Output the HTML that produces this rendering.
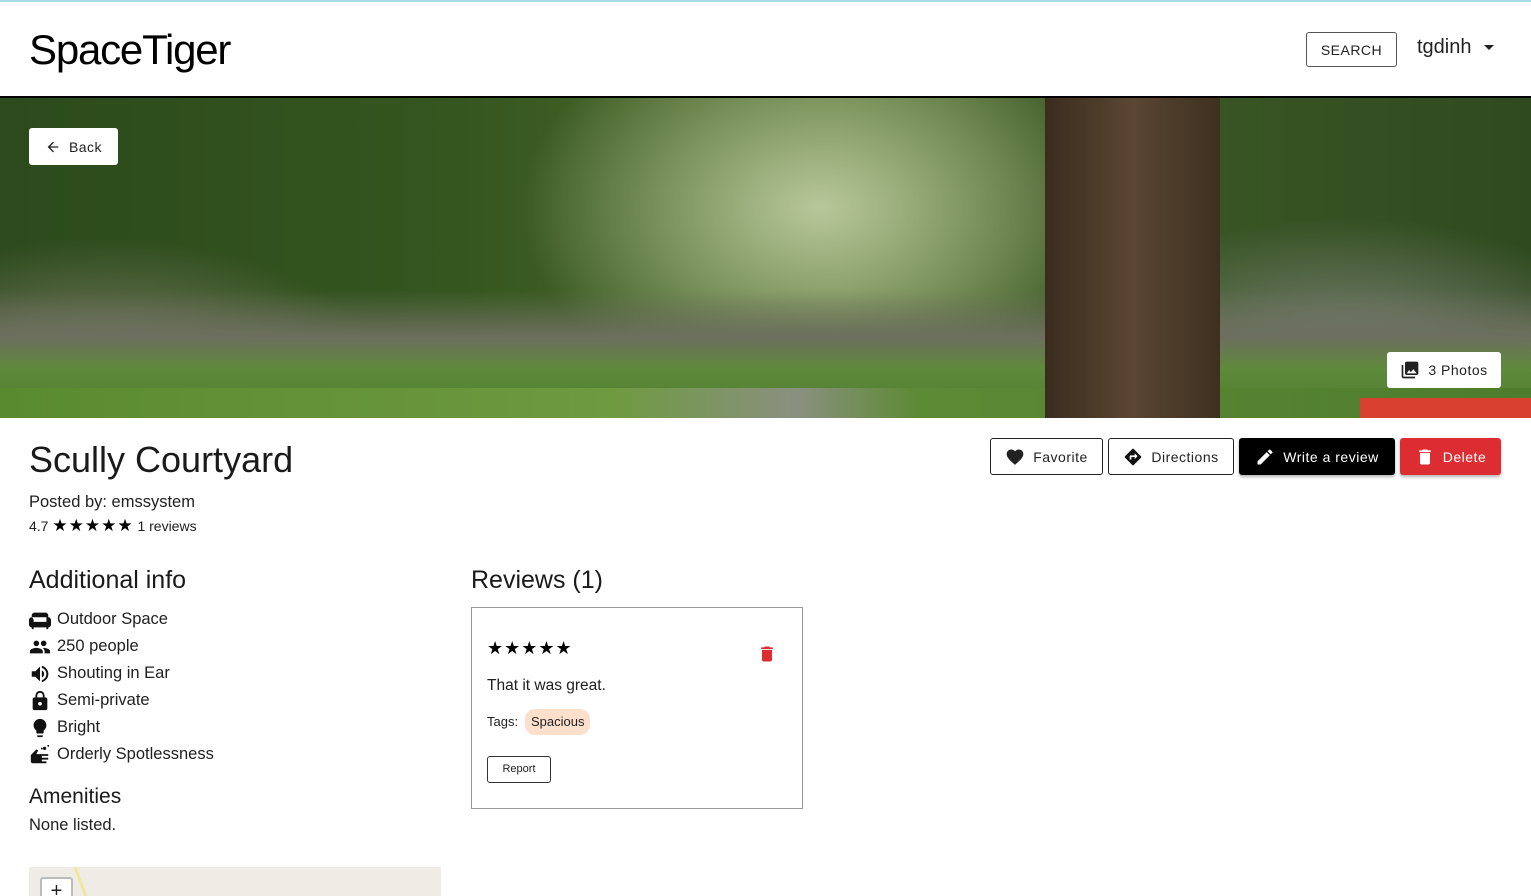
<!DOCTYPE html>
<html><head><style>
*{box-sizing:border-box;margin:0;padding:0}
body{width:1531px;height:896px;overflow:hidden;background:#fff;font-family:"Liberation Sans",sans-serif;color:#212121;position:relative}
.abs{position:absolute}
.btn{position:absolute;display:flex;align-items:center;justify-content:center;gap:8px;font-size:14px;letter-spacing:.5px;border-radius:3px}
.item{display:flex;align-items:center;height:27px;font-size:16.5px;gap:6px}
.item svg{width:22px;height:22px}
</style></head><body>
<div class="abs" style="top:0;left:0;width:1531px;height:2px;background:#a9dbe6"></div>
<div class="abs" style="left:29px;top:26px;font-size:42px;letter-spacing:-1.2px;color:#000">SpaceTiger</div>
<div class="btn" style="left:1306px;top:32px;width:91px;height:35px;border:1px solid #555;font-size:14px;color:#222">SEARCH</div>
<div class="abs" style="left:1417px;top:36px;font-size:20px;color:#222">tgdinh</div>
<svg class="abs" style="left:1484px;top:45px" width="10" height="6" viewBox="0 0 10 6"><path d="M0 0h10L5 5z" fill="#222"/></svg>
<div class="abs" style="top:96px;left:0;width:1531px;height:2px;background:#000"></div>
<div class="abs" style="top:98px;left:0;width:1531px;height:320px;overflow:hidden;background:
linear-gradient(180deg,rgba(0,0,0,0) 60%,#6d6f5e 75%,#5e8a3a 85%,#4b7a2e 100%),
radial-gradient(ellipse 300px 200px at 820px 110px,#b8c79a,transparent),
radial-gradient(ellipse 300px 160px at 100px 300px,#8c8577,transparent),
radial-gradient(ellipse 300px 160px at 1350px 280px,#8a8b88,transparent),
linear-gradient(90deg,#2c4a1c,#35561f 30%,#4f6d2c 55%,#3d5a26 70%,#2f4a1f 100%)">
<div class="abs" style="left:0;top:290px;width:1531px;height:30px;background:linear-gradient(90deg,#5a8a30,#6e9a40 40%,#8a9080 52%,#5d8a35 60%,#4d7c2c)"></div>
<div class="abs" style="left:1045px;top:0;width:175px;height:320px;background:linear-gradient(90deg,#3a2c1e,#5a4632,#3e3020)"></div>
<div class="abs" style="left:1360px;top:300px;width:171px;height:20px;background:#d84030"></div>
</div>
<div class="btn" style="left:29px;top:128px;width:89px;height:37px;background:#fff;color:#222">
<svg width="16" height="16" viewBox="0 0 24 24"><path d="M20 11H7.8l5.6-5.6L12 4l-8 8 8 8 1.4-1.4L7.8 13H20z" fill="#222"/></svg>Back</div>
<div class="btn" style="left:1387px;top:352px;width:114px;height:36px;background:#fff;color:#222">
<svg width="20" height="20" viewBox="0 0 24 24"><path d="M22 16V4c0-1.1-.9-2-2-2H8c-1.1 0-2 .9-2 2v12c0 1.1.9 2 2 2h12c1.1 0 2-.9 2-2zm-11-4l2 2.7 3-3.7 4 5H8l3-4zM2 6v14c0 1.1.9 2 2 2h14v-2H4V6H2z" fill="#222"/></svg>3 Photos</div>
<div class="abs" style="left:29px;top:439px;font-size:36px;color:#1a1a1a">Scully Courtyard</div>
<div class="btn" style="left:990px;top:438px;width:113px;height:37px;border:1px solid #222;color:#222">
<svg width="20" height="20" viewBox="0 0 24 24"><path d="M12 21.4l-1.5-1.3C5.4 15.4 2 12.3 2 8.5 2 5.4 4.4 3 7.5 3c1.7 0 3.4.8 4.5 2.1C13.1 3.8 14.8 3 16.5 3 19.6 3 22 5.4 22 8.5c0 3.8-3.4 6.9-8.5 11.5z" fill="#222"/></svg>Favorite</div>
<div class="btn" style="left:1108px;top:438px;width:126px;height:37px;border:1px solid #222;color:#222">
<svg width="20" height="20" viewBox="0 0 24 24"><path d="M21.7 11.3l-9-9a1 1 0 00-1.4 0l-9 9a1 1 0 000 1.4l9 9a1 1 0 001.4 0l9-9a1 1 0 000-1.4zM14 14.5V12h-4v3H8v-4c0-.6.4-1 1-1h5V7.5l3.5 3.5z" fill="#111"/></svg>Directions</div>
<div class="btn" style="left:1239px;top:438px;width:156px;height:37px;background:#000;color:#fff;box-shadow:0 2px 3px rgba(0,0,0,.3)">
<svg width="20" height="20" viewBox="0 0 24 24"><path d="M3 17.25V21h3.75L17.8 9.94l-3.75-3.75zM20.7 7.04a1 1 0 000-1.41l-2.34-2.34a1 1 0 00-1.41 0l-1.83 1.83 3.75 3.75z" fill="#fff"/></svg>Write a review</div>
<div class="btn" style="left:1400px;top:438px;width:101px;height:37px;background:#dc2d32;color:#fff;box-shadow:0 2px 3px rgba(0,0,0,.3)">
<svg width="20" height="20" viewBox="0 0 24 24"><path d="M6 19c0 1.1.9 2 2 2h8c1.1 0 2-.9 2-2V7H6zM19 4h-3.5l-1-1h-5l-1 1H5v2h14z" fill="#fff"/></svg>Delete</div>
<div class="abs" style="left:29px;top:493px;font-size:16.5px">Posted by: emssystem</div>
<div class="abs" style="left:29px;top:516px;font-size:14px">4.7 <span style="font-size:17px;color:#000;letter-spacing:1px">★★★★★</span> 1 reviews</div>
<div class="abs" style="left:29px;top:566px;font-size:25px;color:#1a1a1a">Additional info</div>
<div class="abs" style="left:29px;top:606px">
<div class="item"><svg viewBox="0 0 24 24"><path d="M21 9V7c0-1.6-1.3-3-3-3H6C4.4 4 3 5.4 3 7v2c-1.6 0-3 1.4-3 3v5c0 1.6 1.4 3 3 3v2h2v-2h14v2h2v-2c1.6 0 3-1.4 3-3v-5c0-1.6-1.4-3-3-3zM19 14H5v-2c0-1.6-1.4-3-3-3h17z" fill="#111"/></svg>Outdoor Space</div>
<div class="item"><svg viewBox="0 0 24 24"><path d="M16 11c1.7 0 3-1.3 3-3s-1.3-3-3-3-3 1.3-3 3 1.3 3 3 3zm-8 0c1.7 0 3-1.3 3-3S9.7 5 8 5 5 6.3 5 8s1.3 3 3 3zm0 2c-2.3 0-7 1.2-7 3.5V19h14v-2.5C15 14.2 10.3 13 8 13zm8 0c-.3 0-.6 0-1 .1 1.2.8 2 2 2 3.4V19h6v-2.5c0-2.3-4.7-3.5-7-3.5z" fill="#111"/></svg>250 people</div>
<div class="item"><svg viewBox="0 0 24 24"><path d="M3 9v6h4l5 5V4L7 9zm13.5 3A4.5 4.5 0 0014 8v8a4.5 4.5 0 002.5-4zM14 3.2v2.1a7 7 0 010 13.4v2.1a9 9 0 000-17.6z" fill="#111"/></svg>Shouting in Ear</div>
<div class="item"><svg viewBox="0 0 24 24"><path d="M18 8h-1V6A5 5 0 007 6v2H6c-1.1 0-2 .9-2 2v10c0 1.1.9 2 2 2h12c1.1 0 2-.9 2-2V10c0-1.1-.9-2-2-2zm-6 9a2 2 0 110-4 2 2 0 010 4zM9 8V6a3 3 0 016 0v2z" fill="#111"/></svg>Semi-private</div>
<div class="item"><svg viewBox="0 0 24 24"><path d="M9 21c0 .5.4 1 1 1h4c.6 0 1-.5 1-1v-1H9zm3-19C8.1 2 5 5.1 5 9c0 2.4 1.2 4.5 3 5.7V17c0 .5.4 1 1 1h6c.6 0 1-.5 1-1v-2.3c1.8-1.3 3-3.4 3-5.7 0-3.9-3.1-7-7-7z" fill="#111"/></svg>Bright</div>
<div class="item"><svg viewBox="0 0 24 24"><path d="M2 12l6-6 2 1-2 4h13v2h-7v2h7v2h-7v2h5v2H4c-1.1 0-2-.9-2-2zM17 3a1.8 1.8 0 110 3.6 1.8 1.8 0 010-3.6zm4-2a1 1 0 110 2 1 1 0 010-2zm-7 3a1 1 0 110 2 1 1 0 010-2z" fill="#111"/></svg>Orderly Spotlessness</div>
</div>
<div class="abs" style="left:29px;top:785px;font-size:21px;color:#1a1a1a">Amenities</div>
<div class="abs" style="left:29px;top:816px;font-size:16.5px">None listed.</div>
<div class="abs" style="left:29px;top:867px;width:412px;height:29px;background:#efebe5;overflow:hidden">
<div class="abs" style="left:11px;top:10px;width:33px;height:30px;border:2px solid #bbb;border-radius:3px;background:#fff;font-size:20px;text-align:center;line-height:24px">+</div>
<div class="abs" style="left:50px;top:0;width:3px;height:30px;background:#f2e69a;transform:skewX(20deg)"></div>
</div>
<div class="abs" style="left:471px;top:566px;font-size:25px;color:#1a1a1a">Reviews (1)</div>
<div class="abs" style="left:471px;top:607px;width:332px;height:202px;border:1px solid #999">
<div class="abs" style="left:15px;top:30px;font-size:18px;color:#000;letter-spacing:1px">★★★★★</div>
<svg class="abs" style="left:285px;top:35px" width="20" height="22" viewBox="0 0 24 24"><path d="M6 19c0 1.1.9 2 2 2h8c1.1 0 2-.9 2-2V7H6zM19 4h-3.5l-1-1h-5l-1 1H5v2h14z" fill="#dc2d32"/></svg>
<div class="abs" style="left:15px;top:69px;font-size:15.5px">That it was great.</div>
<div class="abs" style="left:15px;top:106px;font-size:13px">Tags:</div>
<div class="abs" style="left:53px;top:101px;height:26px;padding:0 6px;border-radius:10px;background:#fde0cc;font-size:13px;line-height:26px">Spacious</div>
<div class="abs" style="left:15px;top:148px;width:64px;height:27px;border:1px solid #333;border-radius:3px;font-size:11px;text-align:center;line-height:25px">Report</div>
</div>
</body></html>
